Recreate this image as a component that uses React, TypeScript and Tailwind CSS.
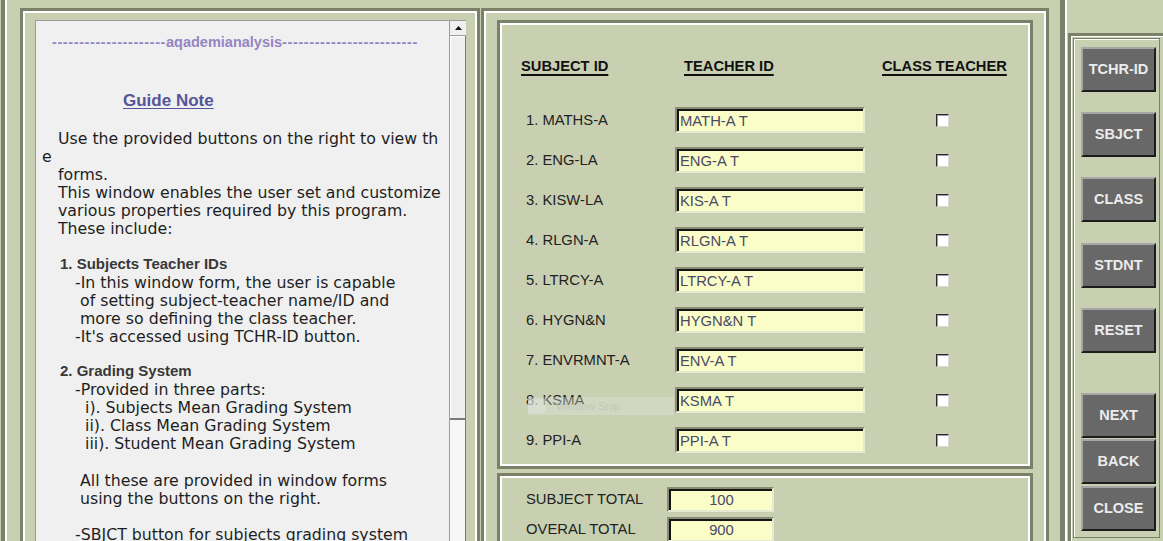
import React from "react";

const frame = "border-[3px] border-[#7b8068] shadow-[inset_0_0_0_2px_#ffffff]";
const sans = { fontFamily: '"Liberation Sans", Arial, sans-serif' };
const verdana = { fontFamily: '"DejaVu Sans", Verdana, sans-serif' };

type Line = { t: string; x: number; mt: number; bold?: boolean };

const lines: Line[] = [
  { t: "Use the provided buttons on the right to view th", x: 22, mt: 20 },
  { t: "e", x: 6, mt: 0 },
  { t: "forms.", x: 22, mt: 0 },
  { t: "This window enables the user set and customize", x: 22, mt: 0 },
  { t: "various properties required by this program.", x: 22, mt: 0 },
  { t: "These include:", x: 22, mt: 0 },
  { t: "1. Subjects Teacher IDs", x: 24, mt: 17, bold: true },
  { t: "-In this window form, the user is capable", x: 39, mt: 1 },
  { t: "of setting subject-teacher name/ID and", x: 44, mt: 0 },
  { t: "more so defining the class teacher.", x: 44, mt: 0 },
  { t: "-It's accessed using TCHR-ID button.", x: 39, mt: 0 },
  { t: "2. Grading System", x: 24, mt: 16, bold: true },
  { t: "-Provided in three parts:", x: 39, mt: 1 },
  { t: "i). Subjects Mean Grading System", x: 49, mt: 0 },
  { t: "ii). Class Mean Grading System", x: 49, mt: 0 },
  { t: "iii). Student Mean Grading System", x: 49, mt: 0 },
  { t: "All these are provided in window forms", x: 44, mt: 19 },
  { t: "using the buttons on the right.", x: 44, mt: 0 },
  { t: "-SBJCT button for subjects grading system", x: 39, mt: 18 },
];

const subjects = [
  ["1. MATHS-A", "MATH-A T"],
  ["2. ENG-LA", "ENG-A T"],
  ["3. KISW-LA", "KIS-A T"],
  ["4. RLGN-A", "RLGN-A T"],
  ["5. LTRCY-A", "LTRCY-A T"],
  ["6. HYGN&N", "HYGN&N T"],
  ["7. ENVRMNT-A", "ENV-A T"],
  ["8. KSMA", "KSMA T"],
  ["9. PPI-A", "PPI-A T"],
];

const buttons: [string, string][] = [
  ["TCHR-ID", "mt-0"],
  ["SBJCT", "mt-[20px]"],
  ["CLASS", "mt-[20px]"],
  ["STDNT", "mt-[21px]"],
  ["RESET", "mt-[20px]"],
  ["NEXT", "mt-[40px]"],
  ["BACK", "mt-px"],
  ["CLOSE", "mt-[2px]"],
];

function Field({ value, center, w, h }: { value: string; center?: boolean; w: string; h: string }) {
  return (
    <div
      className={`${w} ${h} flex border-2 border-t-[#878c72] border-l-[#878c72] border-b-[#e6ead0] border-r-[#e6ead0]`}
    >
      <div
        className={`flex flex-1 items-center border-t-2 border-l-2 border-[#141414] bg-[#fafdc8] text-[14.8px] text-[#4a4a66] ${
          center ? "justify-center" : "pl-px"
        }`}
      >
        {value}
      </div>
    </div>
  );
}

function GuidePane() {
  return (
    <div className="flex h-[600px]">
      <div className="w-[414px] border-l border-t border-[#9c9c9c] bg-[#f0f0f0] text-[#1e1e1e]" style={verdana}>
        <div
          className="mt-[12px] h-[18px] whitespace-nowrap pl-[16px] text-[14.5px] font-bold leading-[18px] text-[#9584c4]"
          style={sans}
        >
          <span className="tracking-[0.6px]">---------------------</span>
          aqademianalysis
          <span className="tracking-[0.6px]">-------------------------</span>
        </div>
        <div className="mt-[41px] h-[18px] pl-[87px] text-[17px] font-bold leading-[18px] text-[#55559a]" style={sans}>
          <span className="underline underline-offset-2">Guide Note</span>
        </div>
        {lines.map((l, i) => (
          <div
            key={i}
            className={`h-[18px] whitespace-nowrap leading-[18px] ${
              l.bold ? "text-[15px] font-bold text-[#383838]" : "text-[15.75px]"
            }`}
            style={{ marginTop: l.mt, paddingLeft: l.x, ...(l.bold ? sans : {}) }}
          >
            {l.t}
          </div>
        ))}
      </div>
      <div className="flex w-[17px] flex-col border-l border-t border-[#9c9c9c] bg-[#f7f7f7]">
        <div className="flex h-[15px] items-center justify-center border-b border-[#9c9c9c] bg-[#f0f0f0]">
          <svg width="7" height="4" viewBox="0 0 7 4">
            <path d="M3.5 0L7 4H0z" fill="#111" />
          </svg>
        </div>
        <div className="h-[384px] border-b-2 border-r border-b-[#7a7a7a] border-r-[#7a7a7a] bg-[#efefef] shadow-[inset_1px_1px_0_#ffffff]" />
        <div className="flex-1 border-r border-[#7a7a7a]" />
      </div>
    </div>
  );
}

function TeacherGrid() {
  return (
    <div className={`${frame} relative h-[449px] pl-[21px] pt-[35px]`} style={sans}>
      <div className="flex h-[16px] items-center text-[14.7px] font-bold text-[#111]">
        <div className="w-[154px]">
          <span className="underline decoration-2 underline-offset-[3px]">SUBJECT ID</span>
        </div>
        <div className="w-[190px] pl-[9px]">
          <span className="underline decoration-2 underline-offset-[3px]">TEACHER ID</span>
        </div>
        <div className="pl-[17px]">
          <span className="underline decoration-2 underline-offset-[3px]">CLASS TEACHER</span>
        </div>
      </div>
      <div className="mt-[33px] flex flex-col gap-[14px]">
        {subjects.map(([s, t]) => (
          <div key={s} className="flex h-[26px] items-center">
            <div className="w-[154px] pl-[5px] text-[14.8px] text-[#222]">{s}</div>
            <Field value={t} w="w-[190px]" h="h-[26px]" />
            <div className="ml-[71px] h-[13px] w-[13px] border border-t-[#2c2c2c] border-l-[#2c2c2c] border-b-[#d8d8d8] border-r-[#d8d8d8] bg-white shadow-[inset_1px_1px_0_#9a9a9a]" />
          </div>
        ))}
      </div>
      <div className="absolute left-[28px] top-[374px] flex h-[18px] w-[146px] items-center gap-[10px] bg-[#dfe6de]/35">
        <div className="h-[14px] w-[18px] bg-[#dfe6e0]/50" />
        <span className="text-[11px] text-[#c3cab8]">Window Snip</span>
      </div>
    </div>
  );
}

function Totals() {
  return (
    <div className={`${frame} mt-[4px] h-[200px] pl-[21px] pt-[11px]`} style={sans}>
      <div className="flex flex-col gap-[5px]">
        {[
          ["SUBJECT TOTAL", "100"],
          ["OVERAL TOTAL", "900"],
        ].map(([l, v]) => (
          <div key={l} className="flex h-[25px] items-center">
            <div className="w-[146px] pl-[5px] text-[14.8px] text-[#222]">{l}</div>
            <Field value={v} center w="w-[107px]" h="h-[25px]" />
          </div>
        ))}
      </div>
    </div>
  );
}

export default function App() {
  return (
    <div className="flex h-[541px] w-[1163px] overflow-hidden bg-[#c9d0b1]">
      <div className="w-px" />
      <div className="w-[6px] border-l-4 border-r-2 border-l-[#7b8068] border-r-white" />

      <div className="flex w-[1053px] gap-px pl-[13px] pt-[8px]">
        <div className={`${frame} h-[560px] w-[460px] pl-[12px] pt-[9px]`}>
          <GuidePane />
        </div>
        <div className={`${frame} h-[560px] w-[568px] px-[13px] pt-[9px]`}>
          <TeacherGrid />
          <Totals />
        </div>
      </div>

      <div className="w-[7px] border-l-[5px] border-r-2 border-l-[#7b8068] border-r-white" />

      <div className="w-[96px] pl-px pt-[33px]">
        <div className="h-full border-l-[3px] border-t-[3px] border-[#7b8068] pb-[3px] pl-[2px] pr-[3px] pt-[2px] shadow-[inset_1px_1px_0_#ffffff]">
          <div className="flex h-full flex-col border border-[#7b8068] pl-[7px] pt-[8px] shadow-[inset_1px_1px_0_#ffffff]">
            {buttons.map(([b, m]) => (
              <div
                key={b}
                className={`${m} flex h-[45px] w-[75px] items-center justify-center border-2 border-t-[#a6a6a6] border-l-[#a6a6a6] border-b-[#1c1c1c] border-r-[#1c1c1c] bg-[#686868] text-[14.5px] font-bold text-[#ececec]`}
                style={sans}
              >
                {b}
              </div>
            ))}
          </div>
        </div>
      </div>
    </div>
  );
}
